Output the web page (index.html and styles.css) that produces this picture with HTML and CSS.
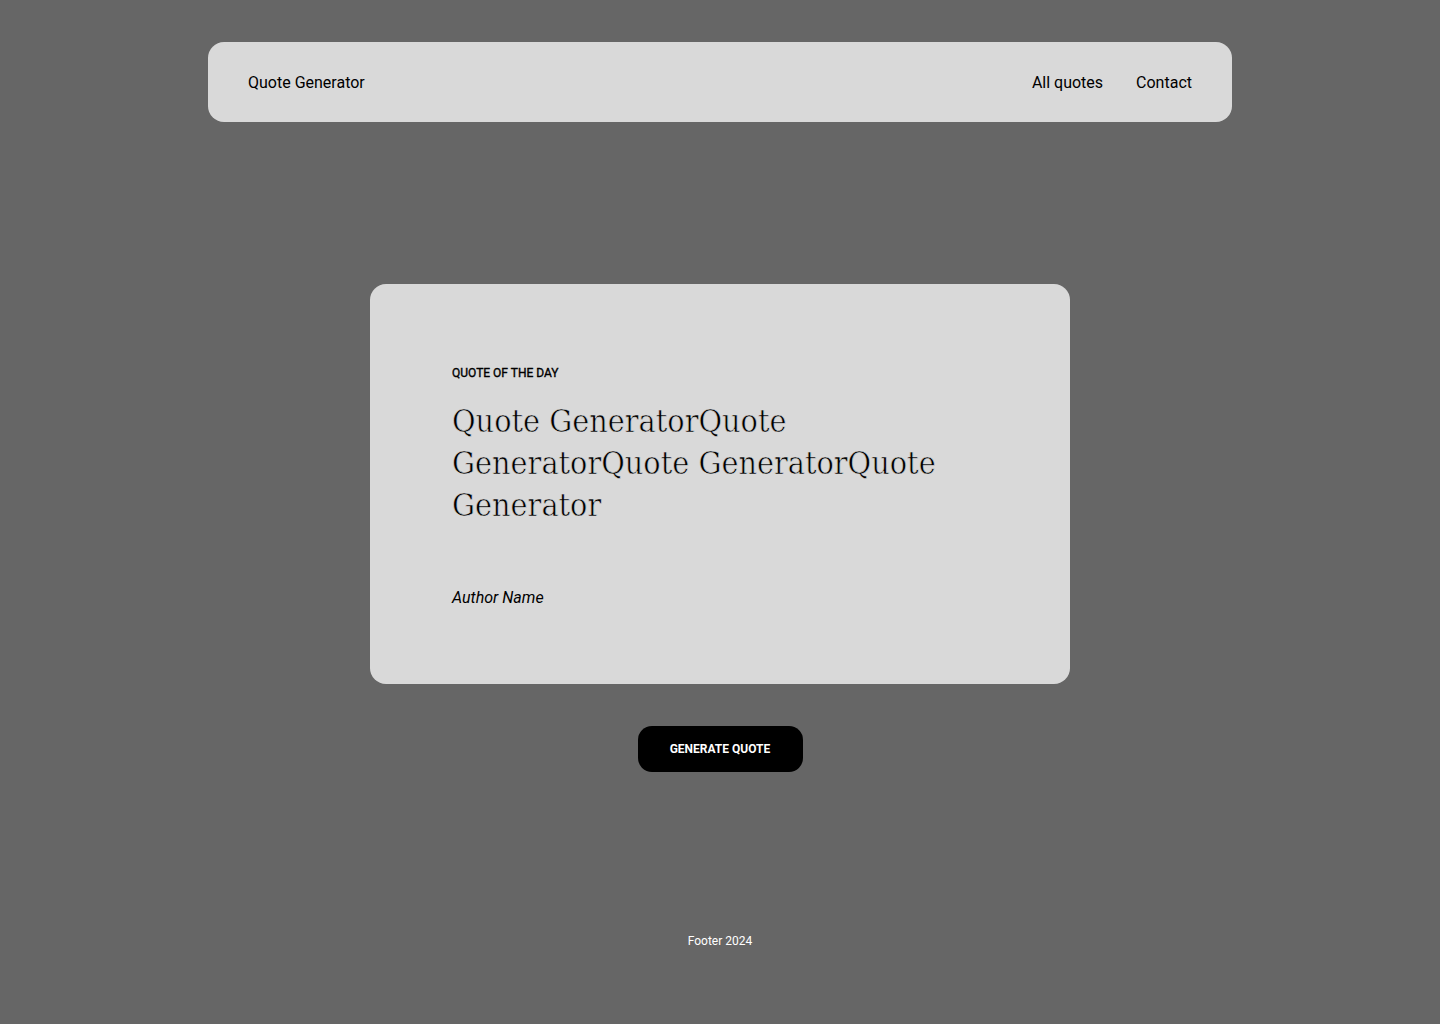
FILE: index.html
```html
<!DOCTYPE html>
<html lang="en">
<head>
<meta charset="utf-8">
<title>Quote Generator</title>
<link rel="stylesheet" href="styles.css">
</head>
<body>
<div class="page">
  <header class="header">
    <div class="brand">Quote Generator</div>
    <nav class="nav">
      <a href="#">All quotes</a>
      <a href="#">Contact</a>
    </nav>
  </header>
  <main class="main">
    <section class="card">
      <div class="label">QUOTE OF THE DAY</div>
      <p class="quote">Quote GeneratorQuote GeneratorQuote GeneratorQuote Generator</p>
      <div class="author">Author Name</div>
    </section>
    <button class="btn">GENERATE QUOTE</button>
  </main>
  <footer class="footer">Footer 2024</footer>
</div>
</body>
</html>
```
FILE: styles.css
```css
* { box-sizing: border-box; }
html, body { margin: 0; padding: 0; }
body {
  background: #666666;
  font-family: Roboto, "Liberation Sans", Arial, sans-serif;
  color: #000;
  min-height: 1024px;
}
.page {
  display: flex;
  flex-direction: column;
  align-items: center;
  padding-top: 42px;
}
.header {
  width: 1024px;
  height: 80px;
  background: #d9d9d9;
  border-radius: 16px;
  display: flex;
  align-items: center;
  justify-content: space-between;
  padding: 0 40px;
  font-size: 16px;
}
.nav { display: flex; gap: 33px; }
.nav a { color: #000; text-decoration: none; }
.main {
  display: flex;
  flex-direction: column;
  align-items: center;
  margin-top: 162px;
}
.card {
  width: 700px;
  height: 400px;
  background: #d9d9d9;
  border-radius: 16px;
  padding: 82px 82px 0 82px;
}
.label {
  font-size: 12px;
  font-weight: 400;
  line-height: 14px;
  -webkit-text-stroke: 0.35px #000;
}
.quote {
  margin: 20px 0 0 0;
  font-family: "DejaVu Serif Condensed", "DejaVu Serif", "Liberation Serif", serif;
  font-stretch: condensed;
  font-weight: 400;
  font-size: 32px;
  line-height: 42px;
  color: #000;
  -webkit-text-stroke: 0.6px #d9d9d9;
}
.author {
  margin-top: 62px;
  font-style: italic;
  font-size: 16px;
  line-height: 19px;
}
.btn {
  margin-top: 42px;
  width: 165px;
  height: 46px;
  border: none;
  border-radius: 14px;
  background: #000;
  color: #fff;
  font-family: Roboto, "Liberation Sans", Arial, sans-serif;
  font-weight: 700;
  font-size: 12px;
  cursor: pointer;
}
.footer {
  margin-top: 162px;
  color: #fff;
  font-size: 12px;
  line-height: 14px;
}
```
